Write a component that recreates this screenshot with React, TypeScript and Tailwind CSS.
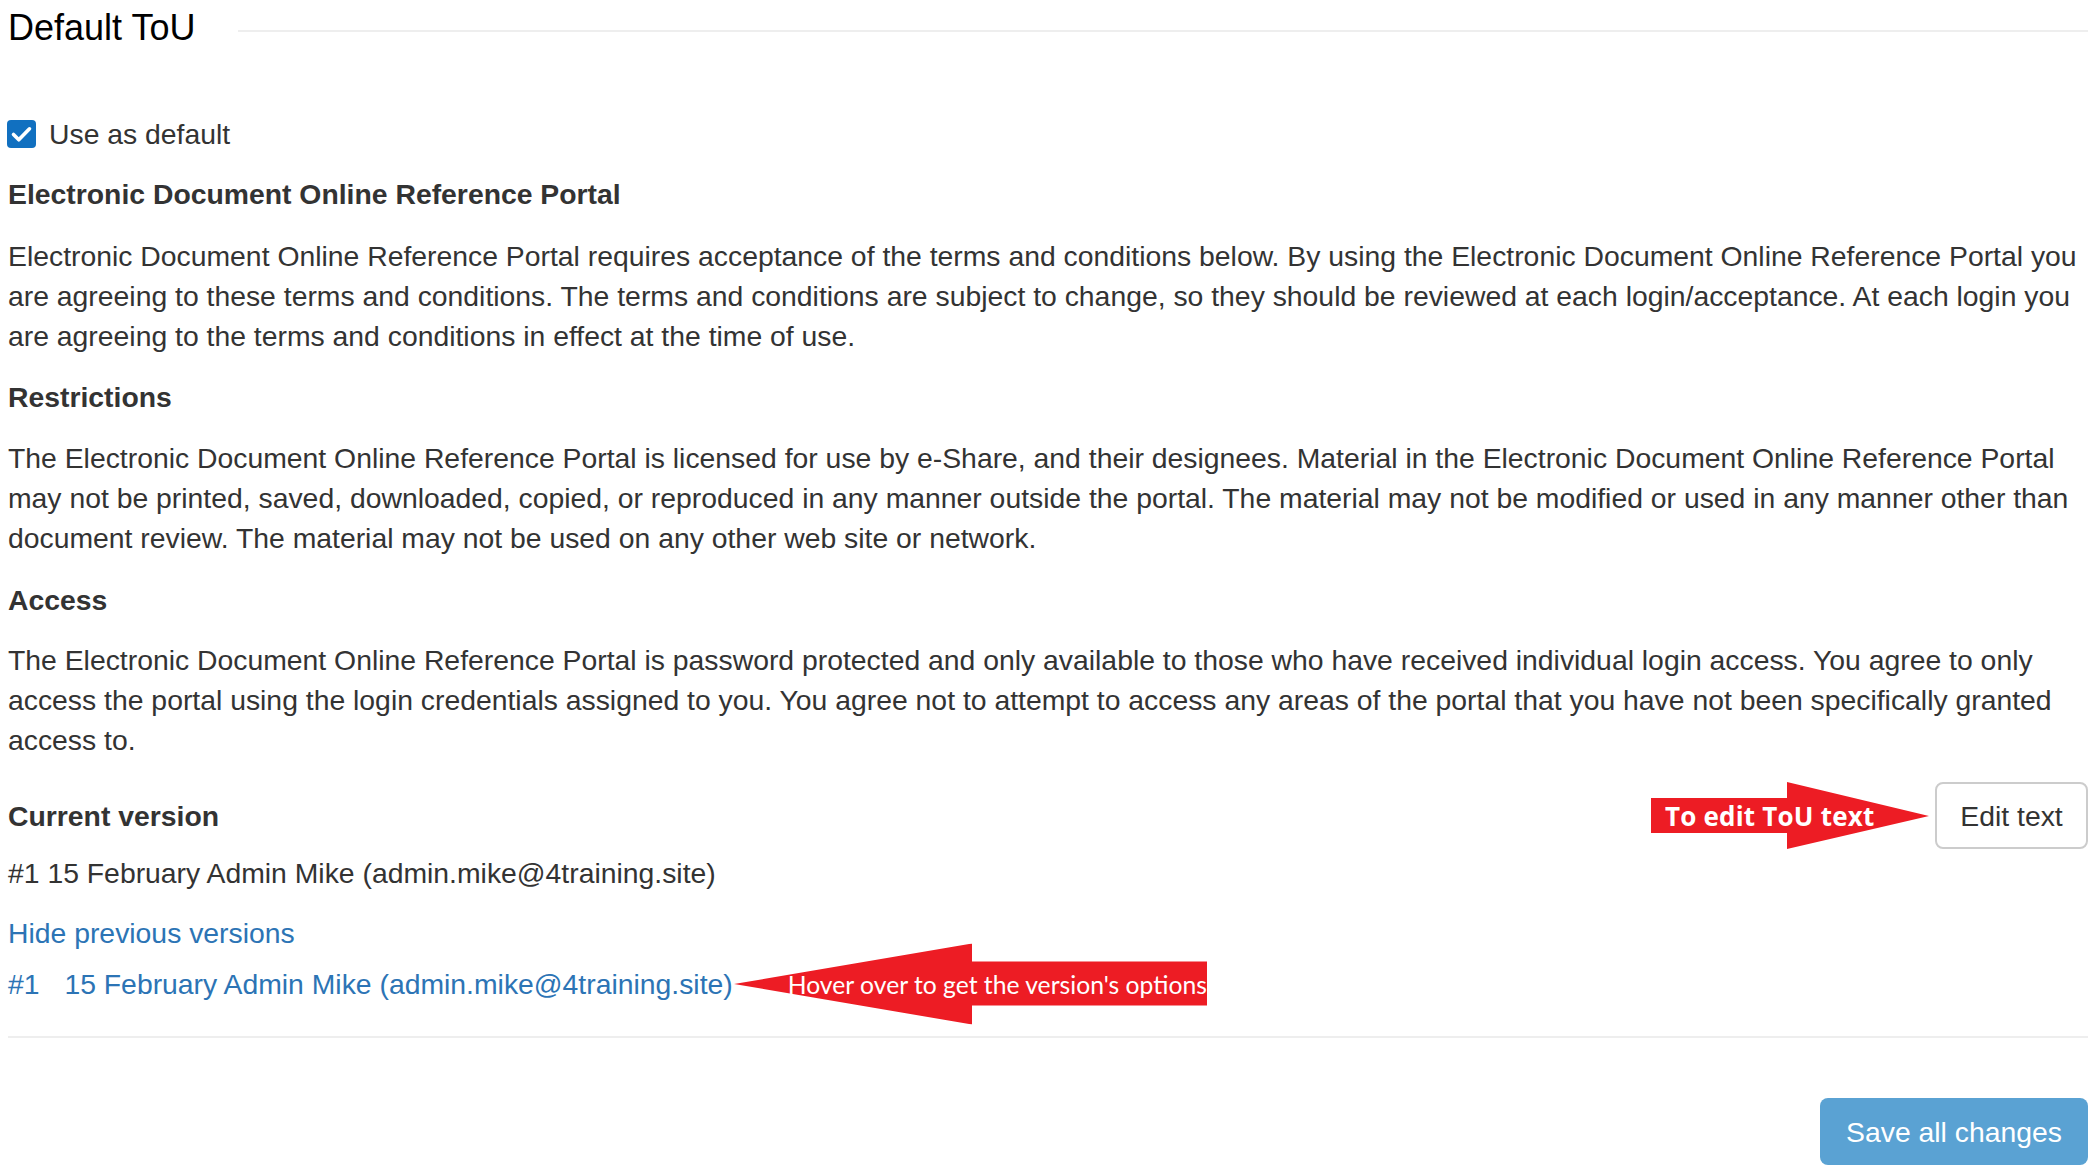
import React from 'react';

const paragraphs = {
  intro:
    'Electronic Document Online Reference Portal requires acceptance of the terms and conditions below. By using the Electronic Document Online Reference Portal you are agreeing to these terms and conditions. The terms and conditions are subject to change, so they should be reviewed at each login/acceptance. At each login you are agreeing to the terms and conditions in effect at the time of use.',
  restrictions:
    'The Electronic Document Online Reference Portal is licensed for use by e-Share, and their designees. Material in the Electronic Document Online Reference Portal may not be printed, saved, downloaded, copied, or reproduced in any manner outside the portal. The material may not be modified or used in any manner other than document review. The material may not be used on any other web site or network.',
  access:
    'The Electronic Document Online Reference Portal is password protected and only available to those who have received individual login access. You agree to only access the portal using the login credentials assigned to you. You agree not to attempt to access any areas of the portal that you have not been specifically granted access to.',
};

// red callout pointing right, towards the Edit text button
const EditArrow: React.FC = () => (
  <div className="absolute right-full top-0 mr-[6px] w-[278px] h-[67px]">
    <svg width="278" height="67" viewBox="0 0 278 67" className="absolute inset-0">
      <polygon points="0,16 136,16 136,0 278,34 136,67 136,51 0,51" fill="#ed1c24" />
    </svg>
    <div className="absolute inset-0 flex items-center pl-[14px] font-['Open_Sans',sans-serif] font-bold text-[26px] text-white tracking-[0.2px]">
      To edit ToU text
    </div>
  </div>
);

// red callout pointing left, towards the previous version link
const HoverArrow: React.FC = () => (
  <div className="relative w-0 h-[40px]">
    <div className="absolute left-[1px] top-1/2 -translate-y-1/2 w-[473px] h-[81px]">
      <svg width="473" height="81" viewBox="0 0 473 81" className="absolute inset-0">
        <polygon points="0,40.5 238,0 238,18 473,18 473,62 238,62 238,81" fill="#ed1c24" />
      </svg>
      <div className="absolute inset-0 flex items-center pl-[54px] font-['Lato',sans-serif] text-[24.7px] text-white whitespace-nowrap">
        Hover over to get the version's options
      </div>
    </div>
  </div>
);

const App: React.FC = () => {
  return (
    <div className="min-h-screen bg-white px-2 font-['Liberation_Sans',Arial,sans-serif] text-[28.35px] leading-[40px] text-[#333333]">
      {/* Title */}
      <div className="flex pt-[8px]">
        <h2 className="text-[36px] leading-[40px] text-black">Default ToU</h2>
        <div className="flex-1 h-[2px] bg-[#eeeeee] ml-[43px] mt-[22px]" />
      </div>

      {/* Default checkbox */}
      <label className="mt-[66px] flex items-center gap-[13px] -ml-px">
        <span className="w-[29px] h-[28px] rounded-[4px] bg-[#1170c0] flex items-center justify-center">
          <svg width="29" height="28" viewBox="0 0 29 28">
            <path d="M6.5 14.5 L11.8 19.8 L22.5 8.8" fill="none" stroke="white" strokeWidth="3.6" strokeLinecap="round" strokeLinejoin="round" />
          </svg>
        </span>
        <span>Use as default</span>
      </label>

      <h4 className="mt-[20px] font-bold">Electronic Document Online Reference Portal</h4>
      <p className="mt-[22px]">{paragraphs.intro}</p>

      <h4 className="mt-[21px] font-bold">Restrictions</h4>
      <p className="mt-[21px]">{paragraphs.restrictions}</p>

      <h4 className="mt-[22px] font-bold">Access</h4>
      <p className="mt-[20px]">{paragraphs.access}</p>

      {/* Current version */}
      <div className="mt-[22px] flex items-center justify-between">
        <h4 className="font-bold">Current version</h4>
        <div className="relative">
          <EditArrow />
          <button className="w-[153px] h-[67px] border-2 border-[#cccccc] rounded-[8px] bg-white text-[#333333] flex items-center justify-center">
            Edit text
          </button>
        </div>
      </div>

      <p className="mt-[4px]">#1 15 February Admin Mike (admin.mike@4training.site)</p>

      <a className="mt-[20px] block text-[#2c74b5] cursor-pointer">Hide previous versions</a>

      <div className="mt-[11px] flex items-center">
        <a className="text-[#2c74b5] cursor-pointer whitespace-nowrap">
          <span className="mr-[17px]">#1</span> 15 February Admin Mike (admin.mike@4training.site)
        </a>
        <HoverArrow />
      </div>

      <div className="mt-[32px] h-[2px] bg-[#eeeeee]" />

      <div className="mt-[60px] flex justify-end">
        <button className="w-[268px] h-[67px] rounded-[8px] bg-[#5aa2d3] text-white">Save all changes</button>
      </div>
    </div>
  );
};

export default App;
